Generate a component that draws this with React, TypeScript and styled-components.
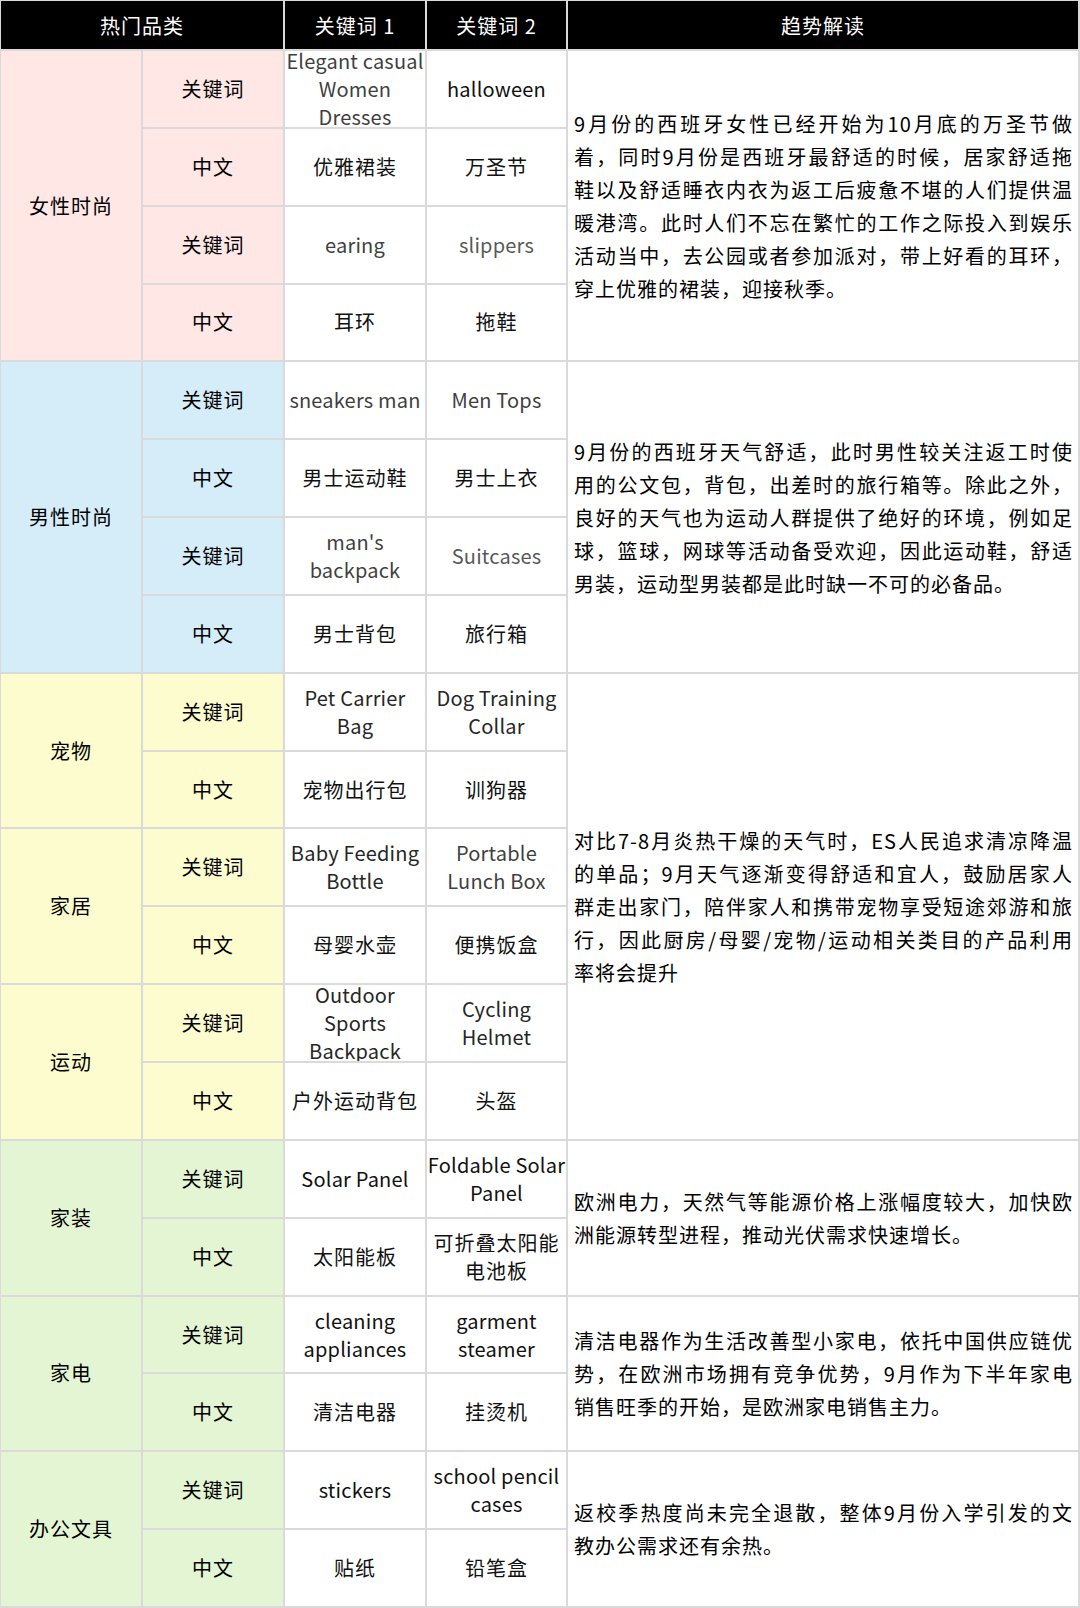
import React from "react";
import styled, { createGlobalStyle } from "styled-components";

type Tone = "ink" | "dark" | "mid" | "soft";

type Pair = {
  en1: string;
  en2: string;
  tone1: Tone;
  tone2: Tone;
  zh1: string;
  zh2: string;
};

type Category = {
  name: string;
  bg: string;
  pairs: Pair[];
};

type Group = {
  trend: string[];
  categories: Category[];
};

const palette = {
  pink: "#ffe7e6",
  blue: "#d5ecf9",
  yellow: "#fdfcce",
  green: "#e4f5d3",
};

const tones: Record<Tone, string> = {
  ink: "#111111",
  dark: "#262626",
  mid: "#3f3f3f",
  soft: "#595959",
};

const GlobalStyle = createGlobalStyle`
  html, body {
    margin: 0;
    padding: 0;
    background: #ffffff;
  }

  body {
    font-family: "Noto Sans CJK SC", "Noto Sans", sans-serif;
  }
`;

const Table = styled.div`
  display: grid;
  grid-template-columns: 140px 140px 140px 139px 1fr;
  grid-template-rows: 48px repeat(20, 1fr);
  gap: 2px;
  width: 1080px;
  height: 1608px;
  box-sizing: border-box;
  padding: 1px 2px 2px 1px;
  background: #dadada;
`;

const HeaderCell = styled.div<{ $span?: number }>`
  grid-column: span ${({ $span }) => $span ?? 1};
  display: flex;
  align-items: center;
  justify-content: center;
  background: #000000;
  color: #ffffff;
  font-size: 20px;
  letter-spacing: 1px;
`;

const Cell = styled.div`
  display: flex;
  align-items: center;
  justify-content: center;
  overflow: hidden;
  background: #ffffff;
  color: #111111;
  text-align: center;
  font-size: 20px;
  line-height: 28px;
  letter-spacing: 1px;
`;

const CategoryCell = styled(Cell)<{ $bg: string; $rows: number }>`
  grid-column: 1;
  grid-row: span ${({ $rows }) => $rows};
  background: ${({ $bg }) => $bg};
  color: #000000;
`;

const LabelCell = styled(Cell)<{ $bg: string }>`
  grid-column: 2;
  background: ${({ $bg }) => $bg};
  color: #000000;
`;

// Latin keywords in the source are set tighter than the Chinese text
const KeywordCell = styled(Cell)<{ $col: number; $tone?: Tone; $latin?: boolean }>`
  grid-column: ${({ $col }) => $col};
  color: ${({ $tone }) => tones[$tone ?? "ink"]};
  white-space: pre-line;
  letter-spacing: ${({ $latin }) => ($latin ? "0.2px" : "1px")};
`;

const TrendCell = styled.div<{ $rows: number }>`
  grid-column: 5;
  grid-row: span ${({ $rows }) => $rows};
  display: flex;
  flex-direction: column;
  justify-content: center;
  padding: 0 5px 0 6px;
  background: #ffffff;
  color: #000000;
  font-size: 20px;
  line-height: 33px;
  letter-spacing: 1px;
`;

const TrendLine = styled.div<{ $last?: boolean }>`
  text-align: justify;
  text-align-last: ${({ $last }) => ($last ? "left" : "justify")};
`;

const groups: Group[] = [
  {
    trend: [
      "9月份的西班牙女性已经开始为10月底的万圣节做",
      "着，同时9月份是西班牙最舒适的时候，居家舒适拖",
      "鞋以及舒适睡衣内衣为返工后疲惫不堪的人们提供温",
      "暖港湾。此时人们不忘在繁忙的工作之际投入到娱乐",
      "活动当中，去公园或者参加派对，带上好看的耳环，",
      "穿上优雅的裙装，迎接秋季。",
    ],
    categories: [
      {
        name: "女性时尚",
        bg: palette.pink,
        pairs: [
          {
            en1: "Elegant casual\nWomen\nDresses",
            en2: "halloween",
            tone1: "mid",
            tone2: "ink",
            zh1: "优雅裙装",
            zh2: "万圣节",
          },
          {
            en1: "earing",
            en2: "slippers",
            tone1: "mid",
            tone2: "soft",
            zh1: "耳环",
            zh2: "拖鞋",
          },
        ],
      },
    ],
  },
  {
    trend: [
      "9月份的西班牙天气舒适，此时男性较关注返工时使",
      "用的公文包，背包，出差时的旅行箱等。除此之外，",
      "良好的天气也为运动人群提供了绝好的环境，例如足",
      "球，篮球，网球等活动备受欢迎，因此运动鞋，舒适",
      "男装，运动型男装都是此时缺一不可的必备品。",
    ],
    categories: [
      {
        name: "男性时尚",
        bg: palette.blue,
        pairs: [
          {
            en1: "sneakers man",
            en2: "Men Tops",
            tone1: "mid",
            tone2: "mid",
            zh1: "男士运动鞋",
            zh2: "男士上衣",
          },
          {
            en1: "man's\nbackpack",
            en2: "Suitcases",
            tone1: "mid",
            tone2: "soft",
            zh1: "男士背包",
            zh2: "旅行箱",
          },
        ],
      },
    ],
  },
  {
    trend: [
      "对比7-8月炎热干燥的天气时，ES人民追求清凉降温",
      "的单品；9月天气逐渐变得舒适和宜人，鼓励居家人",
      "群走出家门，陪伴家人和携带宠物享受短途郊游和旅",
      "行，因此厨房/母婴/宠物/运动相关类目的产品利用",
      "率将会提升",
    ],
    categories: [
      {
        name: "宠物",
        bg: palette.yellow,
        pairs: [
          {
            en1: "Pet Carrier\nBag",
            en2: "Dog Training\nCollar",
            tone1: "dark",
            tone2: "dark",
            zh1: "宠物出行包",
            zh2: "训狗器",
          },
        ],
      },
      {
        name: "家居",
        bg: palette.yellow,
        pairs: [
          {
            en1: "Baby Feeding\nBottle",
            en2: "Portable\nLunch Box",
            tone1: "dark",
            tone2: "mid",
            zh1: "母婴水壶",
            zh2: "便携饭盒",
          },
        ],
      },
      {
        name: "运动",
        bg: palette.yellow,
        pairs: [
          {
            en1: "Outdoor\nSports\nBackpack",
            en2: "Cycling\nHelmet",
            tone1: "dark",
            tone2: "dark",
            zh1: "户外运动背包",
            zh2: "头盔",
          },
        ],
      },
    ],
  },
  {
    trend: [
      "欧洲电力，天然气等能源价格上涨幅度较大，加快欧",
      "洲能源转型进程，推动光伏需求快速增长。",
    ],
    categories: [
      {
        name: "家装",
        bg: palette.green,
        pairs: [
          {
            en1: "Solar Panel",
            en2: "Foldable Solar\nPanel",
            tone1: "ink",
            tone2: "ink",
            zh1: "太阳能板",
            zh2: "可折叠太阳能\n电池板",
          },
        ],
      },
    ],
  },
  {
    trend: [
      "清洁电器作为生活改善型小家电，依托中国供应链优",
      "势，在欧洲市场拥有竞争优势，9月作为下半年家电",
      "销售旺季的开始，是欧洲家电销售主力。",
    ],
    categories: [
      {
        name: "家电",
        bg: palette.green,
        pairs: [
          {
            en1: "cleaning\nappliances",
            en2: "garment\nsteamer",
            tone1: "ink",
            tone2: "ink",
            zh1: "清洁电器",
            zh2: "挂烫机",
          },
        ],
      },
    ],
  },
  {
    trend: [
      "返校季热度尚未完全退散，整体9月份入学引发的文",
      "教办公需求还有余热。",
    ],
    categories: [
      {
        name: "办公文具",
        bg: palette.green,
        pairs: [
          {
            en1: "stickers",
            en2: "school pencil\ncases",
            tone1: "ink",
            tone2: "ink",
            zh1: "贴纸",
            zh2: "铅笔盒",
          },
        ],
      },
    ],
  },
];

function CategoryRows({ category, trend }: { category: Category; trend?: Group }) {
  return (
    <>
      {category.pairs.map((pair, i) => (
        <React.Fragment key={i}>
          {i === 0 && (
            <CategoryCell $bg={category.bg} $rows={category.pairs.length * 2}>
              {category.name}
            </CategoryCell>
          )}
          <LabelCell $bg={category.bg}>关键词</LabelCell>
          <KeywordCell $col={3} $tone={pair.tone1} $latin>
            {pair.en1}
          </KeywordCell>
          <KeywordCell $col={4} $tone={pair.tone2} $latin>
            {pair.en2}
          </KeywordCell>
          {i === 0 && trend && (
            <TrendCell
              $rows={trend.categories.reduce((n, c) => n + c.pairs.length * 2, 0)}
            >
              {trend.trend.map((line, j) => (
                <TrendLine key={j} $last={j === trend.trend.length - 1}>
                  {line}
                </TrendLine>
              ))}
            </TrendCell>
          )}
          <LabelCell $bg={category.bg}>中文</LabelCell>
          <KeywordCell $col={3}>{pair.zh1}</KeywordCell>
          <KeywordCell $col={4}>{pair.zh2}</KeywordCell>
        </React.Fragment>
      ))}
    </>
  );
}

export default function App() {
  return (
    <>
      <GlobalStyle />
      <Table>
        <HeaderCell $span={2}>热门品类</HeaderCell>
        <HeaderCell>关键词 1</HeaderCell>
        <HeaderCell>关键词 2</HeaderCell>
        <HeaderCell>趋势解读</HeaderCell>
        {groups.map((group, g) =>
          group.categories.map((category, c) => (
            <CategoryRows
              key={`${g}-${c}`}
              category={category}
              trend={c === 0 ? group : undefined}
            />
          ))
        )}
      </Table>
    </>
  );
}
